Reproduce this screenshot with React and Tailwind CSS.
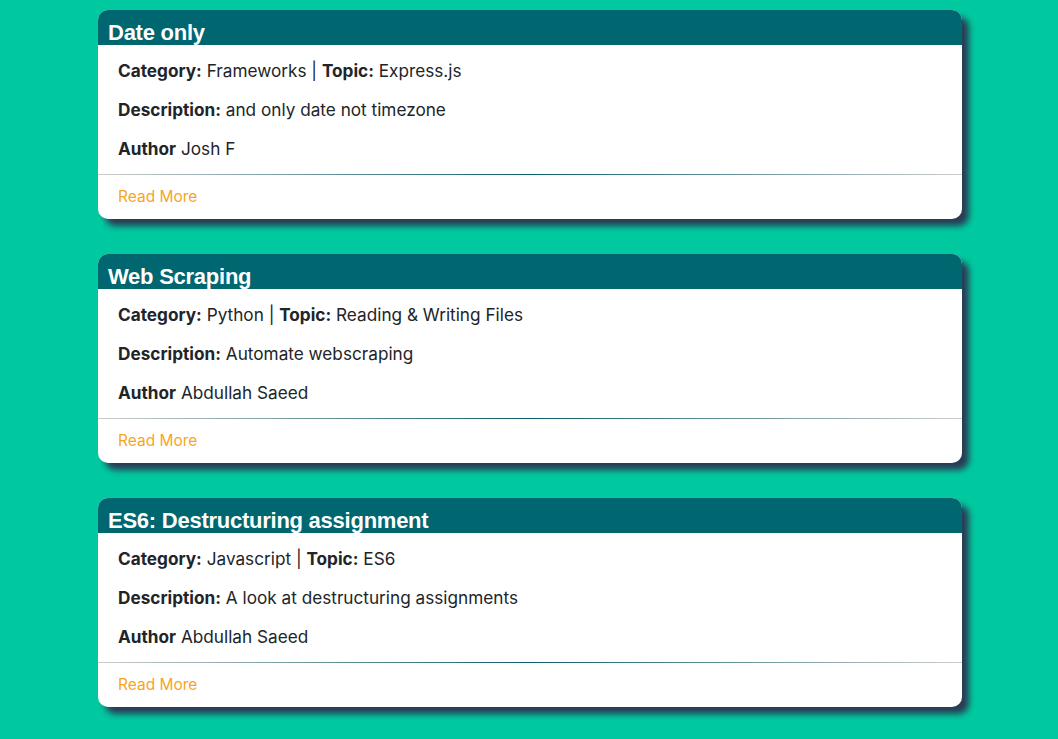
import React from "react";

const posts = [
  { title: "Date only", category: "Frameworks", topic: "Express.js", description: "and only date not timezone", author: "Josh F" },
  { title: "Web Scraping", category: "Python", topic: "Reading & Writing Files", description: "Automate webscraping", author: "Abdullah Saeed" },
  { title: "ES6: Destructuring assignment", category: "Javascript", topic: "ES6", description: "A look at destructuring assignments", author: "Abdullah Saeed" },
];

function Card({ p }) {
  return (
    <div className="w-[864px] bg-white rounded-[10px] overflow-hidden shadow-[7px_7px_6px_#2a3c55]">
      <div className="h-[35px] bg-[#006670] px-[10px] pt-[12px]">
        <h2 className="text-white font-bold text-[22px] leading-[22px] tracking-[-0.25px] whitespace-nowrap" style={{ fontFamily: '"Liberation Sans", Arial, sans-serif' }}>
          {p.title}
        </h2>
      </div>
      <div className="px-[20px] pt-[14px] text-[#212529] text-[17.2px] leading-[24px]">
        <p className="mb-[15px]"><b className="font-bold">Category:</b> {p.category} | <b className="font-bold">Topic:</b> {p.topic}</p>
        <p className="mb-[15px]"><b className="font-bold">Description:</b> {p.description}</p>
        <p className="mb-[13px]"><b className="font-bold">Author</b> {p.author}</p>
      </div>
      <div className="h-px bg-[linear-gradient(to_right,#cccccc,#0b5f6b,#cccccc)]" />
      <div className="h-[44px] flex items-center px-[20px]">
        <span className="text-[#f7a51f] text-[15.5px]">Read More</span>
      </div>
    </div>
  );
}

export default function App() {
  return (
    <div className="min-h-[739px] bg-[#00c9a0] pl-[98px] pt-[10px] flex flex-col gap-[35px]" style={{ fontFamily: 'Inter, "Noto Sans", sans-serif' }}>
      {posts.map((p) => <Card key={p.title} p={p} />)}
    </div>
  );
}
